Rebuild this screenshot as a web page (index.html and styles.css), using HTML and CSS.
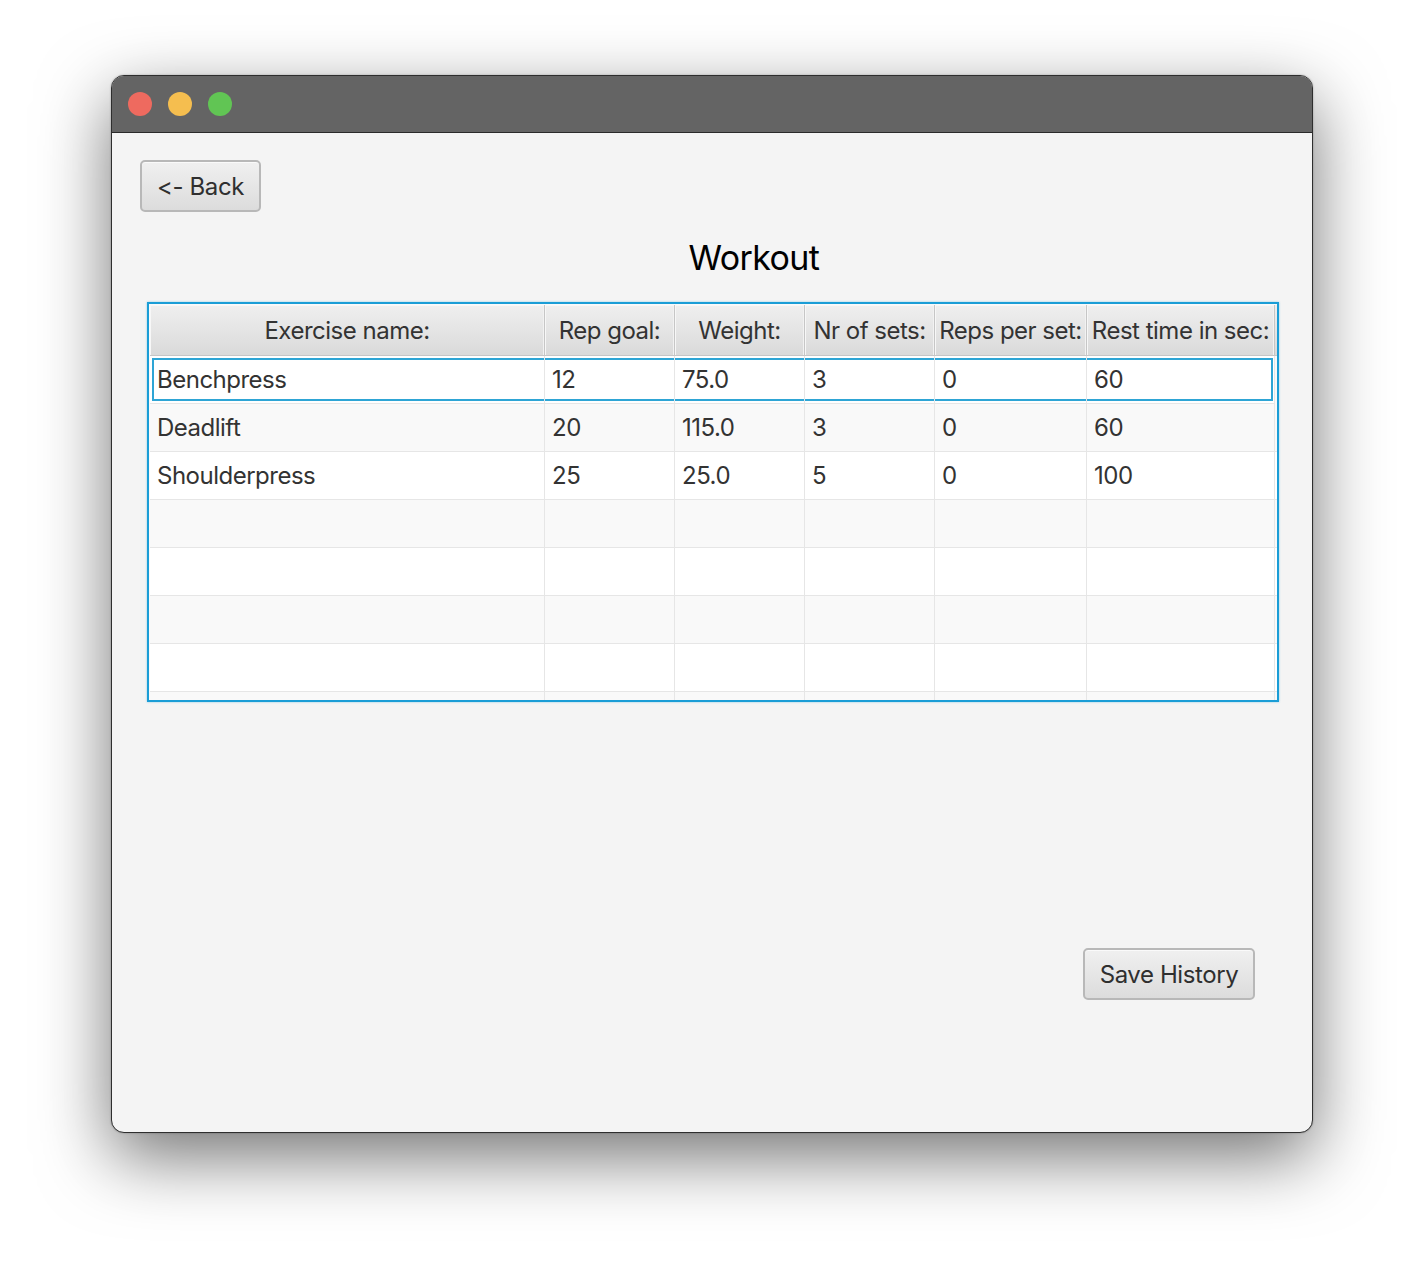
FILE: index.html
```html
<!DOCTYPE html>
<html>
<head>
<meta charset="utf-8">
<link rel="stylesheet" href="styles.css">
</head>
<body>
<div class="window">
  <div class="titlebar">
    <span class="light red"></span>
    <span class="light yellow"></span>
    <span class="light green"></span>
  </div>
  <div class="content">
    <div class="top"><button class="btn back">&lt;- Back</button></div>
    <h1 class="title">Workout</h1>
    <div class="table">
      <div class="hrow">
        <div class="hcell c1">Exercise name:</div>
        <div class="hcell c2">Rep goal:</div>
        <div class="hcell c3">Weight:</div>
        <div class="hcell c4">Nr of sets:</div>
        <div class="hcell c5">Reps per set:</div>
        <div class="hcell c6">Rest time in sec:</div>
      </div>
      <div class="row even selected">
        <div class="cell c1">Benchpress</div><div class="cell c2">12</div><div class="cell c3">75.0</div><div class="cell c4">3</div><div class="cell c5">0</div><div class="cell c6">60</div>
      </div>
      <div class="row odd">
        <div class="cell c1">Deadlift</div><div class="cell c2">20</div><div class="cell c3">115.0</div><div class="cell c4">3</div><div class="cell c5">0</div><div class="cell c6">60</div>
      </div>
      <div class="row even">
        <div class="cell c1">Shoulderpress</div><div class="cell c2">25</div><div class="cell c3">25.0</div><div class="cell c4">5</div><div class="cell c5">0</div><div class="cell c6">100</div>
      </div>
      <div class="row odd"><div class="cell c1"></div><div class="cell c2"></div><div class="cell c3"></div><div class="cell c4"></div><div class="cell c5"></div><div class="cell c6"></div></div>
      <div class="row even"><div class="cell c1"></div><div class="cell c2"></div><div class="cell c3"></div><div class="cell c4"></div><div class="cell c5"></div><div class="cell c6"></div></div>
      <div class="row odd"><div class="cell c1"></div><div class="cell c2"></div><div class="cell c3"></div><div class="cell c4"></div><div class="cell c5"></div><div class="cell c6"></div></div>
      <div class="row even"><div class="cell c1"></div><div class="cell c2"></div><div class="cell c3"></div><div class="cell c4"></div><div class="cell c5"></div><div class="cell c6"></div></div>
      <div class="row odd"><div class="cell c1"></div><div class="cell c2"></div><div class="cell c3"></div><div class="cell c4"></div><div class="cell c5"></div><div class="cell c6"></div></div>
    </div>
    <div class="bottom"><button class="btn save">Save History</button></div>
  </div>
</div>
</body>
</html>
```

FILE: styles.css
```css
html, body {
  margin: 0;
  padding: 0;
  background: #ffffff;
}
body {
  font-family: Inter, "Noto Sans", sans-serif;
  width: 1424px;
  height: 1280px;
  overflow: hidden;
}
.window {
  box-sizing: border-box;
  width: 1202px;
  height: 1058px;
  margin: 75px 0 0 111px;
  border: 1px solid #2e2e2e;
  border-radius: 13px;
  overflow: hidden;
  background: #f4f4f4;
  box-shadow: 0 24px 70px rgba(0, 0, 0, 0.55), 0 0 2px rgba(0,0,0,0.3);
  display: flex;
  flex-direction: column;
}
.titlebar {
  height: 56px;
  flex: none;
  background: #646464;
  border-bottom: 1px solid #2a2a2a;
  display: flex;
  align-items: center;
  gap: 16px;
  padding-left: 16px;
}
.light {
  width: 24px;
  height: 24px;
  border-radius: 50%;
  display: block;
}
.red { background: #ee6a5f; }
.yellow { background: #f5be4f; }
.green { background: #61c554; }
.content {
  flex: 1;
  display: flex;
  flex-direction: column;
  padding: 27px 0 0 0;
}
.top {
  padding-left: 28px;
  display: flex;
}
.btn {
  font-family: Inter, "Noto Sans", sans-serif;
  font-size: 24px;
  color: #2f2f2f;
  background: linear-gradient(#f0f0f0, #dcdcdc);
  border: 2px solid #b8b8b8;
  border-radius: 5px;
  box-shadow: inset 0 1px 0 #fafafa;
  padding: 0;
  height: 52px;
  letter-spacing: -0.4px;
}
.back { width: 121px; }
.title {
  margin: 26px 0 0 0;
  text-align: center;
  font-size: 34px;
  font-weight: 400;
  line-height: 40px;
  height: 40px;
  color: #000;
  padding-left: 84px;
  letter-spacing: -0.6px;
}
.table {
  box-sizing: border-box;
  margin: 24px 0 0 35px;
  width: 1132px;
  height: 400px;
  border: 2px solid #1a9dd6;
  padding: 1px 0 0 1px;
  box-shadow: 0 0 2px rgba(26, 157, 214, 0.45);
  background: #f9f9f9;
  overflow: hidden;
  font-size: 24px;
  color: #333;
  letter-spacing: -0.5px;
}
.hrow {
  display: flex;
  height: 51px;
  box-sizing: border-box;
  border-bottom: 1px solid #c6c6c6;
  background: linear-gradient(#efefef, #dadada);
}
.hcell {
  box-sizing: border-box;
  border-right: 1px solid #c6c6c6;
  box-shadow: inset 1px 1px 0 #f7f7f7, inset -1px 0 0 #f2f2f2;
  display: flex;
  align-items: center;
  justify-content: center;
  white-space: nowrap;
}
.c1 { width: 395px; flex: none; }
.c2 { width: 130px; flex: none; }
.c3 { width: 130px; flex: none; }
.c4 { width: 130px; flex: none; }
.c5 { width: 152px; flex: none; }
.c6 { width: 188px; flex: none; }
.row {
  display: flex;
  height: 48px;
  box-sizing: border-box;
  border-bottom: 1px solid #e6e6e6;
}
.even { background: #ffffff; }
.odd { background: #f9f9f9; }
.selected {
  box-shadow: inset 0 0 0 2px #ffffff, inset 0 0 0 4px #2ea5d5;
  width: 1125px;
}
.cell {
  box-sizing: border-box;
  border-right: 1px solid #e6e6e6;
  display: flex;
  align-items: center;
  padding-left: 7px;
  padding-bottom: 1px;
  white-space: nowrap;
}
.bottom {
  display: flex;
  justify-content: flex-end;
  padding-right: 57px;
  margin-top: 246px;
}
.save { width: 172px; height: 52px; }
```
